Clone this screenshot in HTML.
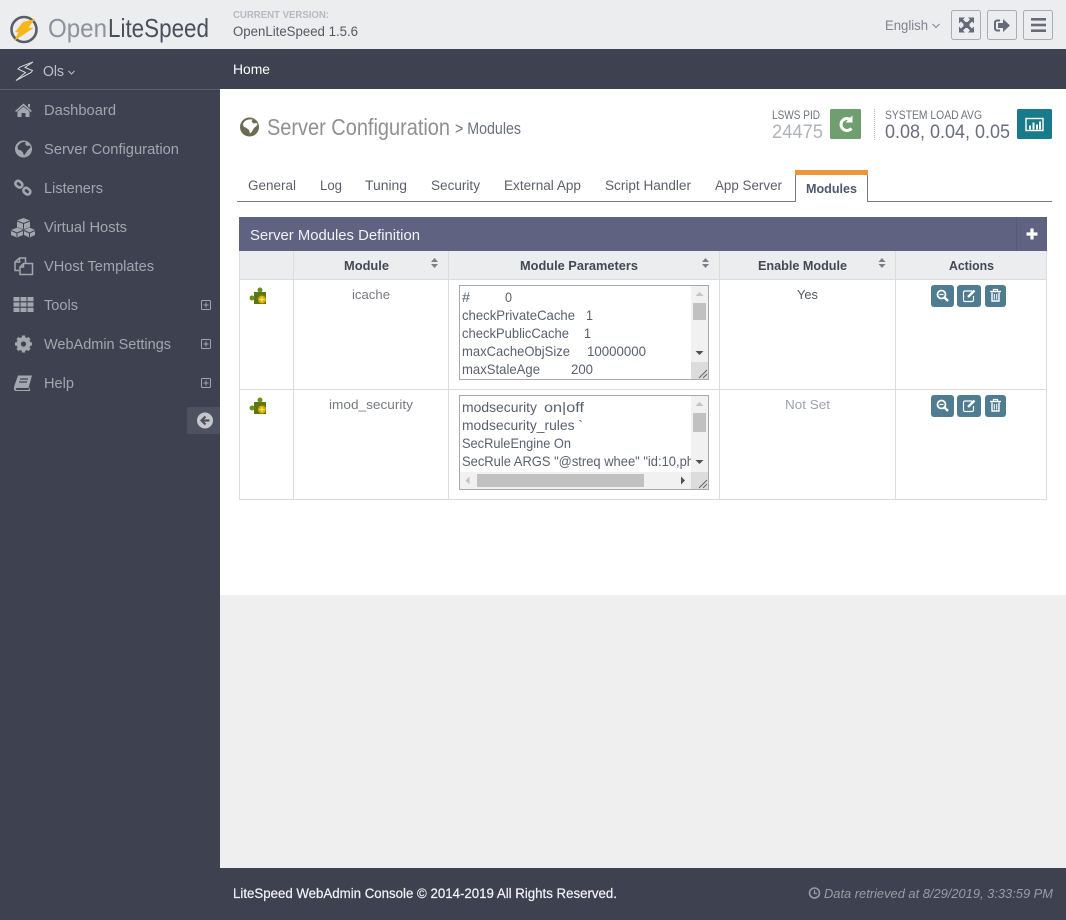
<!DOCTYPE html>
<html lang="en"><head><meta charset="utf-8"><title>OpenLiteSpeed WebAdmin</title>
<style>
html,body{margin:0;padding:0;background:#fff;width:1066px;height:920px;overflow:hidden}
svg{display:block}
text{font-family:"Liberation Sans",sans-serif;white-space:pre}
.s text{font-size:14.5px;fill:#a4a6ae}
.t text{font-size:13.5px;fill:#5d606b}
.h text{font-size:12.5px;font-weight:bold;fill:#444754}
.m text{font-size:14px;fill:#5a6070}
</style></head><body>
<svg width="1066" height="920" viewBox="0 0 1066 920" xmlns="http://www.w3.org/2000/svg">
<!-- backgrounds -->
<rect width="1066" height="920" fill="#fff"/>
<rect x="0" y="0" width="1066" height="49" fill="#ecedef"/>
<rect x="0" y="49" width="1066" height="40" fill="#3e4150"/>
<rect x="0" y="89" width="220" height="831" fill="#3e4150"/>
<rect x="0" y="89" width="220" height="1" fill="#5a5d6b"/>
<rect x="220" y="595" width="846" height="273" fill="#efefef"/>
<rect x="220" y="868" width="846" height="52" fill="#3e4150"/>

<!-- logo -->
<circle cx="24" cy="29.5" r="12.5" fill="none" stroke="#5b5e6a" stroke-width="2.600"/>
<path d="M23 22 L35 19 L28.500 27.500 L33.500 28 L14 41 L18.500 32.500 L15 32 Z" fill="#f6b71a"/>
<text x="48" y="37" font-size="26" fill="#8e929c" textLength="59" lengthAdjust="spacingAndGlyphs">Open</text>
<text x="108" y="37" font-size="26" fill="#4b4f5d" textLength="101" lengthAdjust="spacingAndGlyphs">LiteSpeed</text>
<text x="233" y="18" font-size="10" font-weight="bold" fill="#b7b9c0" textLength="96" lengthAdjust="spacingAndGlyphs">CURRENT VERSION:</text>
<text x="233" y="36" font-size="13.500" fill="#555864" textLength="125" lengthAdjust="spacingAndGlyphs">OpenLiteSpeed 1.5.6</text>

<!-- top right -->
<text x="885" y="30" font-size="14" fill="#80838e" textLength="43" lengthAdjust="spacingAndGlyphs">English</text>
<path d="M932.500 24 L936 27.500 L939.500 24" fill="none" stroke="#80838e" stroke-width="1"/>
<g fill="#ecedef" stroke="#a9acb3">
<rect x="951.500" y="10.500" width="29" height="29" rx="2"/>
<rect x="987.500" y="10.500" width="29" height="29" rx="2"/>
<rect x="1023.500" y="10.500" width="29" height="29" rx="2"/>
</g>
<g fill="#676a78">
<path d="M959 18 h6 l-2 2 l2.500 2.500 h2 L970 20 l-2 -2 h6 v6 l-2 -2 l-2.500 2.500 v2 L972 29 l2 -2 v6 h-6 l2 -2 l-2.500 -2.500 h-2 L963 31 l2 2 h-6 v-6 l2 2 l2.500 -2.500 v-2 L961 22 l-2 2 z" transform="translate(0,-0.500)"/>
<path d="M1000 19.500 h-3 a3 3 0 0 0 -3 3 v6 a3 3 0 0 0 3 3 h3 v-2 h-3 a1 1 0 0 1 -1 -1 v-6 a1 1 0 0 1 1 -1 h3 z"/>
<path d="M1003 19 l7 6.500 l-7 6.500 v-4 h-5 v-5 h5 z"/>
<rect x="1031" y="18" width="15" height="2.600"/>
<rect x="1031" y="23.700" width="15" height="2.600"/>
<rect x="1031" y="29.400" width="15" height="2.600"/>
</g>

<!-- navbar -->
<path d="M33 62 L20 67 L18 69 L25.500 72.500 L16 80.500 L31 72.500 L32.500 70.500 L25 67.500 Z" fill="none" stroke="#d5d6da" stroke-width="1"/>
<text x="43" y="76" font-size="15" fill="#bfc1c8" textLength="21" lengthAdjust="spacingAndGlyphs">Ols</text>
<path d="M68.500 71 L71.500 74 L74.500 71" fill="none" stroke="#bfc1c8" stroke-width="1"/>
<text x="233" y="74" font-size="13.500" fill="#fff" textLength="37" lengthAdjust="spacingAndGlyphs">Home</text>

<!-- sidebar -->
<g class="s">
<text x="44" y="115" textLength="72" lengthAdjust="spacingAndGlyphs">Dashboard</text>
<text x="44" y="154" textLength="135" lengthAdjust="spacingAndGlyphs">Server Configuration</text>
<text x="44" y="193" textLength="59" lengthAdjust="spacingAndGlyphs">Listeners</text>
<text x="44" y="232" textLength="83" lengthAdjust="spacingAndGlyphs">Virtual Hosts</text>
<text x="44" y="271" textLength="110" lengthAdjust="spacingAndGlyphs">VHost Templates</text>
<text x="44" y="310" textLength="34" lengthAdjust="spacingAndGlyphs">Tools</text>
<text x="44" y="349" textLength="127" lengthAdjust="spacingAndGlyphs">WebAdmin Settings</text>
<text x="44" y="388" textLength="30" lengthAdjust="spacingAndGlyphs">Help</text>
</g>
<g fill="#a4a6ae">
<!-- home -->
<path d="M15 111 L23.500 103.500 L32 111 L30.800 112 L23.500 105.800 L16.200 112 Z"/>
<path d="M28 104 h2 v4 l-2 -1.800 z"/>
<path d="M17.500 111.500 L23.500 106.800 L29.500 111.500 V117 H25.500 V113 H21.500 V117 H17.500 Z"/>
<!-- globe -->
<circle cx="23.500" cy="149" r="8.500"/>
<path d="M20 143.500 c2 -1.500 4 -2 6 -1.500 l-1 2 l2 2 l3 -0.500 l0.500 2 l-3 3 l-2 3 l-1.500 2 l-1 -3 l-2 -2 l-3 -1 l-0.500 -3 z" fill="#3e4150"/>
<!-- links -->
<g fill="none" stroke="#a4a6ae" stroke-width="2.600">
<rect x="15.300" y="181.500" width="7.400" height="5.400" rx="2.700" transform="rotate(40 19 184)"/>
<rect x="23.300" y="188.500" width="7.400" height="5.400" rx="2.700" transform="rotate(40 27 191)"/>
</g>
<!-- cubes -->
<path d="M23.500 218 L30 220.500 V227 L23.500 229.500 L17 227 V220.500 Z"/>
<path d="M17.500 227.500 L23 230 V235 L17 237.500 L11 235 V230 Z"/>
<path d="M29.500 227.500 L35 230 V235 L29.500 237.500 L24 235 V230 Z"/>
<g fill="none" stroke="#3e4150" stroke-width="1">
<path d="M17 221 L23.500 223.500 L30 221 M23.500 223.500 V229"/>
<path d="M11 230.500 L17 233 L23 230.500 M17 233 V237"/>
<path d="M24 230.500 L29.500 233 L35 230.500 M29.500 233 V237"/>
</g>
<!-- vhost template -->
<g fill="none" stroke="#a4a6ae" stroke-width="1.500">
<path d="M19 270.500 H15 V262 L19.500 258 H25.500 V263"/>
<path d="M19.500 258 V262 H15"/>
<path d="M23.500 263.500 H32.500 V274.500 H20 V267 Z"/>
<path d="M23.500 263.500 V267 H20"/>
</g>
<!-- grid -->
<g>
<rect x="13.500" y="297" width="6" height="4.200"/><rect x="20.500" y="297" width="6" height="4.200"/><rect x="27.500" y="297" width="6" height="4.200"/>
<rect x="13.500" y="302.400" width="6" height="4.200"/><rect x="20.500" y="302.400" width="6" height="4.200"/><rect x="27.500" y="302.400" width="6" height="4.200"/>
<rect x="13.500" y="307.800" width="6" height="4.200"/><rect x="20.500" y="307.800" width="6" height="4.200"/><rect x="27.500" y="307.800" width="6" height="4.200"/>
</g>
<!-- gear -->
<circle cx="23.500" cy="344" r="5" fill="none" stroke="#a4a6ae" stroke-width="4"/>
<g stroke="#a4a6ae" stroke-width="3.200">
<path d="M23.500 335.500 V352.500 M15 344 H32 M17.500 338 L29.500 350 M29.500 338 L17.500 350"/>
</g>
<circle cx="23.500" cy="344" r="2.600" fill="#3e4150"/>
<!-- book -->
<path d="M18 375.500 H32 L28.500 388 H17 C15 388 15.500 390 17 390 H28.500 L29.500 387 L30 391 H16 C13.500 391 13.800 387.500 14.300 386 Z"/>
<path d="M20 379 H28 M19 382 H27" stroke="#3e4150" stroke-width="1.200" fill="none"/>
</g>
<!-- plus squares -->
<g fill="none" stroke="#a4a6ae" stroke-width="1">
<rect x="201.500" y="300.500" width="9" height="9" rx="1"/><path d="M203.500 305 H208.500 M206 302.500 V307.500"/>
<rect x="201.500" y="339.500" width="9" height="9" rx="1"/><path d="M203.500 344 H208.500 M206 341.500 V346.500"/>
<rect x="201.500" y="378.500" width="9" height="9" rx="1"/><path d="M203.500 383 H208.500 M206 380.500 V385.500"/>
</g>
<!-- collapse -->
<path d="M187 409 a2 2 0 0 1 2 -2 H220 V434 H189 a2 2 0 0 1 -2 -2 Z" fill="#4e5160"/>
<circle cx="205" cy="420.500" r="8" fill="#c6c7cc"/>
<path d="M209.500 420.500 H202 M205.500 416.500 L201.500 420.500 L205.500 424.500" fill="none" stroke="#4e5160" stroke-width="2.200"/>

<!-- page title -->
<circle cx="249.500" cy="127" r="9.500" fill="#6d6b55"/>
<path d="M245 121 c2 -1.500 5 -2 7.500 -1.500 l-1 2 l2 2 l3.500 -0.500 l0.500 2 l-3.500 3 l-2 3.500 l-2 2 l-1 -3.500 l-2.500 -2 l-3 -1.500 l-0.500 -3 z" fill="#fff"/>
<text x="267" y="135" font-size="23" fill="#8f908f" textLength="183" lengthAdjust="spacingAndGlyphs">Server Configuration</text>
<text x="455" y="134" font-size="17" fill="#6a7080" textLength="66" lengthAdjust="spacingAndGlyphs">&gt; Modules</text>

<!-- status -->
<text x="772" y="119" font-size="11.500" fill="#70737d" textLength="48" lengthAdjust="spacingAndGlyphs">LSWS PID</text>
<text x="772" y="138" font-size="19" fill="#b0b3bc" textLength="51" lengthAdjust="spacingAndGlyphs">24475</text>
<rect x="830" y="109" width="31" height="30" rx="1.500" fill="#6f9f6e"/>
<path d="M851.500 120.500 A6 6 0 1 0 851.500 128.500" fill="none" stroke="#fff" stroke-width="3"/>
<path d="M852.500 115.500 V122.500 H845.500 Z" fill="#fff"/>
<path d="M874.500 109 V141" stroke="#bbb" stroke-width="1" stroke-dasharray="1 1"/>
<text x="885" y="119" font-size="11.500" fill="#70737d" textLength="97" lengthAdjust="spacingAndGlyphs">SYSTEM LOAD AVG</text>
<text x="885" y="138" font-size="19" fill="#6a6d80" textLength="125" lengthAdjust="spacingAndGlyphs">0.08, 0.04, 0.05</text>
<rect x="1017" y="109" width="35" height="30" rx="1.500" fill="#177b8c"/>
<rect x="1026" y="118.500" width="17" height="12" fill="none" stroke="#fff" stroke-width="1.400"/>
<path d="M1029 129.500 v-4 h2 v4 z M1032.500 129.500 v-7 h2 v7 z M1036 129.500 v-5 h2 v5 z M1039 129.500 v-8 h2 v8 z" fill="#fff"/>

<!-- tabs -->
<g class="t">
<text x="248" y="190" textLength="48" lengthAdjust="spacingAndGlyphs">General</text>
<text x="320" y="190" textLength="22" lengthAdjust="spacingAndGlyphs">Log</text>
<text x="365" y="190" textLength="42" lengthAdjust="spacingAndGlyphs">Tuning</text>
<text x="431" y="190" textLength="49" lengthAdjust="spacingAndGlyphs">Security</text>
<text x="504" y="190" textLength="77" lengthAdjust="spacingAndGlyphs">External App</text>
<text x="605" y="190" textLength="86" lengthAdjust="spacingAndGlyphs">Script Handler</text>
<text x="715" y="190" textLength="67" lengthAdjust="spacingAndGlyphs">App Server</text>
</g>
<path d="M237 201.500 H795.500 V170.500 H867.500 V201.500 H1052" fill="none" stroke="#7b7b80" stroke-width="1"/>
<rect x="795" y="170" width="73" height="5" fill="#ee9538"/>
<text x="806" y="193" font-size="12.500" font-weight="bold" fill="#4c5870" textLength="51" lengthAdjust="spacingAndGlyphs">Modules</text>

<!-- panel header -->
<rect x="239" y="217" width="808" height="34" fill="#5f6280"/>
<rect x="1016" y="217" width="1" height="34" fill="#565975"/>
<text x="250" y="240" font-size="14.500" fill="#f3f3f6" textLength="170" lengthAdjust="spacingAndGlyphs">Server Modules Definition</text>
<path d="M1032 228.500 V239.500 M1026.500 234 H1037.500" stroke="#fff" stroke-width="3.200"/>

<!-- table -->
<rect x="239" y="251" width="808" height="28" fill="#ecedef"/>
<g fill="none" stroke="#dcdcdc" stroke-width="1">
<path d="M239.500 251 V500 M293.500 251 V500 M448.500 251 V500 M719.500 251 V500 M895.500 251 V500 M1046.500 251 V500"/>
<path d="M239 279.500 H1047 M239 389.500 H1047 M239 499.500 H1047"/>
</g>
<g class="h">
<text x="344" y="270" textLength="45" lengthAdjust="spacingAndGlyphs">Module</text>
<text x="520" y="270" textLength="118" lengthAdjust="spacingAndGlyphs">Module Parameters</text>
<text x="758" y="270" textLength="89" lengthAdjust="spacingAndGlyphs">Enable Module</text>
<text x="949" y="270" textLength="45" lengthAdjust="spacingAndGlyphs">Actions</text>
</g>
<g fill="#7b7e88">
<path d="M431 262 L434.500 258 L438 262 Z M431 264 H438 L434.500 268 Z"/>
<path d="M702 262 L705.500 258 L709 262 Z M702 264 H709 L705.500 268 Z"/>
<path d="M878.500 262 L882 258 L885.500 262 Z M878.500 264 H885.500 L882 268 Z"/>
</g>

<!-- puzzle icons -->
<g>
<rect x="254" y="292" width="12" height="12" fill="#5a7712"/>
<circle cx="260" cy="290" r="2.500" fill="#6e8f16"/>
<circle cx="252" cy="298" r="2.500" fill="#6e8f16"/>
<circle cx="262" cy="299.500" r="4" fill="#d8a90a"/>
<path d="M262 297 V302 M259.500 299.500 H264.500" stroke="#ffe94d" stroke-width="1.200"/>
</g>
<g>
<rect x="254" y="402" width="12" height="12" fill="#5a7712"/>
<circle cx="260" cy="400" r="2.500" fill="#6e8f16"/>
<circle cx="252" cy="408" r="2.500" fill="#6e8f16"/>
<circle cx="262" cy="409.500" r="4" fill="#d8a90a"/>
<path d="M262 407 V412 M259.500 409.500 H264.500" stroke="#ffe94d" stroke-width="1.200"/>
</g>

<text x="352" y="299" font-size="13" fill="#777a82" textLength="38" lengthAdjust="spacingAndGlyphs">icache</text>
<text x="329" y="409" font-size="13" fill="#777a82" textLength="84" lengthAdjust="spacingAndGlyphs">imod_security</text>
<text x="797" y="299" font-size="13" fill="#55585f" textLength="21" lengthAdjust="spacingAndGlyphs">Yes</text>
<text x="785" y="409" font-size="13" fill="#9ea2ad" textLength="45" lengthAdjust="spacingAndGlyphs">Not Set</text>

<!-- textarea 1 -->
<rect x="459.500" y="285.500" width="249" height="94" fill="#fff" stroke="#aaa"/>
<rect x="691" y="286" width="17" height="93" fill="#f1f1f1"/>
<rect x="693" y="303" width="13" height="17" fill="#c1c1c1"/>
<path d="M695.500 296 L699.500 292 L703.500 296 Z" fill="#c4c4c4"/>
<path d="M695.500 351 L699.500 355 L703.500 351 Z" fill="#505050"/>
<rect x="691" y="362" width="17" height="17" fill="#dcdcdc"/>
<path d="M699 378 L707 370 M703 378 L707 374" stroke="#666" stroke-width="1"/>
<g class="m">
<text x="462" y="302" textLength="8" lengthAdjust="spacingAndGlyphs">#</text>
<text x="505" y="302" textLength="7" lengthAdjust="spacingAndGlyphs">0</text>
<text x="462" y="320" textLength="113" lengthAdjust="spacingAndGlyphs">checkPrivateCache</text>
<text x="586" y="320" textLength="7" lengthAdjust="spacingAndGlyphs">1</text>
<text x="462" y="338" textLength="107" lengthAdjust="spacingAndGlyphs">checkPublicCache</text>
<text x="584" y="338" textLength="7" lengthAdjust="spacingAndGlyphs">1</text>
<text x="462" y="356" textLength="108" lengthAdjust="spacingAndGlyphs">maxCacheObjSize</text>
<text x="587" y="356" textLength="59" lengthAdjust="spacingAndGlyphs">10000000</text>
<text x="462" y="374" textLength="78" lengthAdjust="spacingAndGlyphs">maxStaleAge</text>
<text x="571" y="374" textLength="22" lengthAdjust="spacingAndGlyphs">200</text>
</g>

<!-- textarea 2 -->
<rect x="459.500" y="395.500" width="249" height="94" fill="#fff" stroke="#aaa"/>
<svg x="460" y="396" width="231" height="76"><text x="2" y="70" font-size="14" fill="#5a6070" textLength="232" lengthAdjust="spacingAndGlyphs">SecRule ARGS "@streq whee" "id:10,ph</text></svg>
<rect x="691" y="396" width="17" height="76" fill="#f1f1f1"/>
<rect x="693" y="413" width="13" height="19" fill="#c1c1c1"/>
<path d="M695.500 406 L699.500 402 L703.500 406 Z" fill="#c4c4c4"/>
<path d="M695.500 460 L699.500 464 L703.500 460 Z" fill="#505050"/>
<rect x="460" y="472" width="231" height="17" fill="#f1f1f1"/>
<rect x="477" y="474" width="167" height="13" fill="#c1c1c1"/>
<path d="M469.500 476.500 L465.500 480.500 L469.500 484.500 Z" fill="#c4c4c4"/>
<path d="M681 476.500 L685 480.500 L681 484.500 Z" fill="#505050"/>
<rect x="691" y="472" width="17" height="17" fill="#dcdcdc"/>
<path d="M699 488 L707 480 M703 488 L707 484" stroke="#666" stroke-width="1"/>
<g class="m">
<text x="462" y="412" textLength="75" lengthAdjust="spacingAndGlyphs">modsecurity</text>
<text x="544" y="412" textLength="40" lengthAdjust="spacingAndGlyphs">on|off</text>
<text x="462" y="430" textLength="121" lengthAdjust="spacingAndGlyphs">modsecurity_rules `</text>
<text x="462" y="448" textLength="109" lengthAdjust="spacingAndGlyphs">SecRuleEngine On</text>
</g>

<!-- action buttons -->
<g>
<rect x="931" y="285" width="23" height="22" rx="3" fill="#4f7c90"/>
<rect x="957" y="285" width="24" height="22" rx="3" fill="#4f7c90"/>
<rect x="985" y="285" width="21" height="22" rx="3" fill="#4f7c90"/>
<g fill="none" stroke="#fff">
<circle cx="941.500" cy="294.500" r="4" stroke-width="1.800"/>
<path d="M944.500 297.500 L948 301" stroke-width="2.400"/>
<path d="M939.500 294.500 H943.500" stroke-width="1.200"/>
<path d="M972 291 H965 a1.500 1.500 0 0 0 -1.500 1.500 V300 a1.500 1.500 0 0 0 1.500 1.500 H972 a1.500 1.500 0 0 0 1.500 -1.500 V296" stroke-width="1.200"/>
<path d="M968 297 L974.500 290.500" stroke-width="2.400"/>
<path d="M992 292.500 V301 H999 V292.500" stroke-width="1.400"/>
<path d="M990 291.500 H1001" stroke-width="1.400"/>
<path d="M993.500 291 V289.500 H997.500 V291" stroke-width="1.200"/>
<path d="M994.300 294 V299.500 M996.700 294 V299.500" stroke-width="1"/>
</g>
</g>
<g transform="translate(0,110)">
<rect x="931" y="285" width="23" height="22" rx="3" fill="#4f7c90"/>
<rect x="957" y="285" width="24" height="22" rx="3" fill="#4f7c90"/>
<rect x="985" y="285" width="21" height="22" rx="3" fill="#4f7c90"/>
<g fill="none" stroke="#fff">
<circle cx="941.500" cy="294.500" r="4" stroke-width="1.800"/>
<path d="M944.500 297.500 L948 301" stroke-width="2.400"/>
<path d="M939.500 294.500 H943.500" stroke-width="1.200"/>
<path d="M972 291 H965 a1.500 1.500 0 0 0 -1.500 1.500 V300 a1.500 1.500 0 0 0 1.500 1.500 H972 a1.500 1.500 0 0 0 1.500 -1.500 V296" stroke-width="1.200"/>
<path d="M968 297 L974.500 290.500" stroke-width="2.400"/>
<path d="M992 292.500 V301 H999 V292.500" stroke-width="1.400"/>
<path d="M990 291.500 H1001" stroke-width="1.400"/>
<path d="M993.500 291 V289.500 H997.500 V291" stroke-width="1.200"/>
<path d="M994.300 294 V299.500 M996.700 294 V299.500" stroke-width="1"/>
</g>
</g>

<!-- footer -->
<text x="233" y="898" font-size="13.500" fill="#f4f4f6" stroke="#f4f4f6" stroke-width="0.200" textLength="384" lengthAdjust="spacingAndGlyphs">LiteSpeed WebAdmin Console © 2014-2019 All Rights Reserved.</text>
<circle cx="814.500" cy="893" r="5" fill="none" stroke="#9a9ca5" stroke-width="1.600"/>
<path d="M814.500 890 V893.500 H817" fill="none" stroke="#9a9ca5" stroke-width="1.200"/>
<text x="824" y="898" font-size="13" font-style="italic" fill="#9a9ca5" textLength="229" lengthAdjust="spacingAndGlyphs">Data retrieved at 8/29/2019, 3:33:59 PM</text>
</svg>
</body></html>
